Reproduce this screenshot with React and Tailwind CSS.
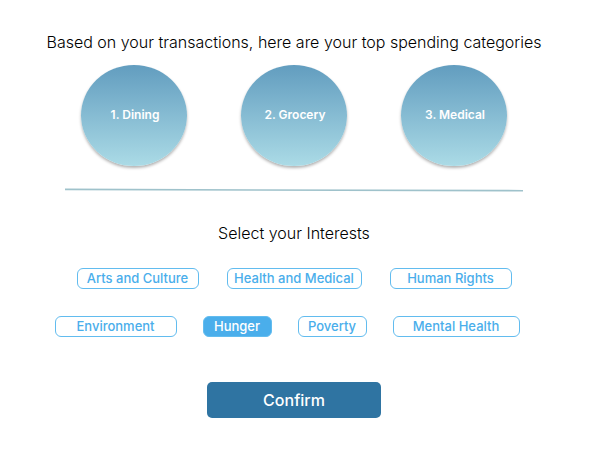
const categories = ["1. Dining", "2. Grocery", "3. Medical"];

const interestRows = [
  {
    className: "mt-[25px] gap-7",
    items: [
      { label: "Arts and Culture", width: "w-[122px]" },
      { label: "Health and Medical", width: "w-[135px]" },
      { label: "Human Rights", width: "w-[122px]" },
    ],
  },
  {
    className: "mt-[27px] gap-[26px] pr-3.5",
    items: [
      { label: "Environment", width: "w-[122px]" },
      { label: "Hunger", width: "w-[69px]", selected: true },
      { label: "Poverty", width: "w-[69px]" },
      { label: "Mental Health", width: "w-[127px]" },
    ],
  },
];

function Category({ label }) {
  return (
    <li className="flex h-[101px] w-[106px] items-center justify-center rounded-[50%] bg-linear-to-b from-[#629dbf] to-[#abdbe6] pb-px pl-0.5 text-xs font-semibold text-white shadow-[0_2px_3px_rgba(0,0,0,0.3)]">
      {label}
    </li>
  );
}

function Interest({ label, width, selected = false }) {
  return (
    <button
      type="button"
      aria-pressed={selected}
      className={`h-[21px] shrink-0 rounded-md border border-[#62bcef] pb-0.5 text-[13px] leading-4 font-medium whitespace-nowrap ${width} ${
        selected ? "bg-[#4aaeeb] text-white" : "bg-white text-[#4aaeeb]"
      }`}
    >
      {label}
    </button>
  );
}

export default function App() {
  return (
    <main className="flex min-h-screen flex-col items-center bg-white pt-8 pr-3.5 pb-8 font-[Inter,sans-serif] text-black">
      <h1 className="text-base leading-5 font-light">
        Based on your transactions, here are your top spending categories
      </h1>

      <ul className="mt-[13px] flex justify-center gap-[54px]">
        {categories.map((label) => (
          <Category key={label} label={label} />
        ))}
      </ul>

      <svg className="mt-[22px] h-1 w-[78%]" viewBox="0 0 460 4" preserveAspectRatio="none" aria-hidden="true">
        <line x1="0" y1="1.4" x2="460" y2="2.7" stroke="#9fc2cb" strokeWidth="1.6" />
      </svg>

      <h2 className="mt-[31px] text-base leading-5 font-light">Select your Interests</h2>

      {interestRows.map((row, index) => (
        <div key={index} className={`flex justify-center ${row.className}`}>
          {row.items.map((item) => (
            <Interest key={item.label} {...item} />
          ))}
        </div>
      ))}

      <button
        type="button"
        className="mt-[45px] h-9 w-[174px] rounded-[5px] bg-[#2f74a2] text-base font-medium text-white"
      >
        Confirm
      </button>
    </main>
  );
}
